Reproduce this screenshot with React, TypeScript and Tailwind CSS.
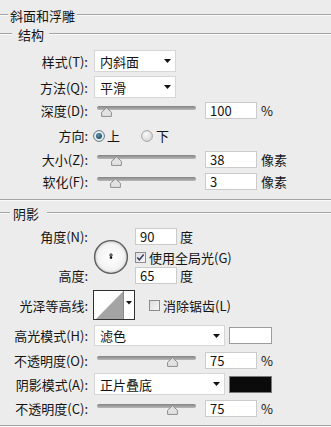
import React from 'react';

const Label: React.FC<{ children: React.ReactNode }> = ({ children }) => (
  <div className="w-[88px] shrink-0 text-right whitespace-nowrap">{children}</div>
);

const Line: React.FC<{ className?: string }> = ({ className = '' }) => (
  <div className={`h-0 border-t border-[#a4a4a4] border-b border-b-[#fafafa] ${className}`} />
);

const Header: React.FC<{ title: string; left: string; text: string }> = ({ title, left, text }) => (
  <div className="flex items-center h-[18px]">
    <Line className={`shrink-0 ${left}`} />
    <span className={text}>{title}</span>
    <Line className="flex-1" />
  </div>
);

const Arrow = () => (
  <svg width="7" height="4" viewBox="0 0 7 4">
    <path d="M0 0 H7 L3.5 4 Z" fill="#111" />
  </svg>
);

const Select: React.FC<{ value: string; width: string }> = ({ value, width }) => (
  <div
    className={`ml-[6px] h-full ${width} bg-white border border-[#d6d6d6] flex items-center justify-between pl-[5px] pr-[4px]`}
  >
    <span>{value}</span>
    <Arrow />
  </div>
);

const Input: React.FC<{ value: string; className?: string }> = ({ value, className = '' }) => (
  <div className={`h-full bg-white border border-[#cbcbcb] flex items-center pl-[4px] ${className}`}>
    {value}
  </div>
);

const Slider: React.FC<{ thumb: string }> = ({ thumb }) => (
  <div className="relative w-[99px] h-full ml-[9px] shrink-0">
    <div className="absolute left-0 right-0 top-[4px] h-[4px] rounded-full bg-gradient-to-b from-[#848484] to-[#b8b8b8]" />
    {/* thumb sits on top of the track */}
    <svg className={`absolute top-[5px] ${thumb}`} width="11" height="10" viewBox="0 0 11 10">
      <path d="M5.5 0.8 L10.4 5.2 V9.4 H0.6 V5.2 Z" fill="#e2e2e2" stroke="#8e8e8e" strokeWidth="1" />
    </svg>
  </div>
);

const SliderRow: React.FC<{ label: string; thumb: string; value: string; unit: string; mt: string }> = ({
  label,
  thumb,
  value,
  unit,
  mt,
}) => (
  <div className={`flex items-center h-[17px] ${mt}`}>
    <Label>{label}</Label>
    <Slider thumb={thumb} />
    <Input value={value} className="ml-[9px] w-[52px]" />
    <span className="ml-[4px]">{unit}</span>
  </div>
);

const Radio: React.FC<{ checked?: boolean }> = ({ checked }) => (
  <svg width="12" height="12" viewBox="0 0 12 12">
    <defs>
      <radialGradient id="rOff" cx="0.4" cy="0.35" r="0.7">
        <stop offset="0" stopColor="#fafafa" />
        <stop offset="1" stopColor="#d4d4d4" />
      </radialGradient>
      <radialGradient id="rOn" cx="0.4" cy="0.35" r="0.7">
        <stop offset="0" stopColor="#5a95b0" />
        <stop offset="1" stopColor="#1f4a5e" />
      </radialGradient>
    </defs>
    <circle cx="6" cy="6" r="5.4" fill={checked ? '#e9eef1' : 'url(#rOff)'} stroke={checked ? '#5f7480' : '#a6a6a6'} />
    {checked && <circle cx="6" cy="6" r="3" fill="url(#rOn)" />}
  </svg>
);

const Checkbox: React.FC<{ checked?: boolean }> = ({ checked }) => (
  <svg width="11" height="11" viewBox="0 0 11 11">
    <defs>
      <linearGradient id="cb" x1="0" y1="0" x2="1" y2="1">
        <stop offset="0" stopColor="#dcdcdc" />
        <stop offset="1" stopColor="#f8f8f8" />
      </linearGradient>
    </defs>
    <rect x="0.5" y="0.5" width="10" height="10" fill="url(#cb)" stroke="#8c8c8c" />
    {checked && <path d="M2.3 5.4 L4.4 7.8 L8.7 2.6" fill="none" stroke="#2f3f66" strokeWidth="1.5" />}
  </svg>
);

export default function App() {
  return (
    <div className="w-[331px] h-[427px] overflow-hidden bg-[#ececec] text-[13px] leading-none text-[#141414] font-['Noto_Sans_CJK_SC','Noto_Sans',sans-serif] flex flex-col">
      {/* 斜面和浮雕 */}
      <div className="mt-[6px]">
        <Header title="斜面和浮雕" left="w-[8px]" text="px-[2px]" />
      </div>
      <div className="mt-[1px]">
        <Header title="结构" left="w-[12px]" text="pl-[6px] pr-[5px]" />
      </div>

      <div className="flex items-center h-[22px] mt-[7px]">
        <Label>样式(T):</Label>
        <Select value="内斜面" width="w-[82px]" />
      </div>
      <div className="flex items-center h-[22px] mt-[4px]">
        <Label>方法(Q):</Label>
        <Select value="平滑" width="w-[82px]" />
      </div>

      <SliderRow label="深度(D):" thumb="left-[4px]" value="100" unit="%" mt="mt-[4px]" />

      <div className="flex items-center h-[17px] mt-[8px]">
        <Label>方向:</Label>
        <div className="ml-[5px] flex items-center">
          <Radio checked />
          <span className="ml-[2px]">上</span>
        </div>
        <div className="ml-[21px] flex items-center">
          <Radio />
          <span className="ml-[3px]">下</span>
        </div>
      </div>

      <SliderRow label="大小(Z):" thumb="left-[14px]" value="38" unit="像素" mt="mt-[7px]" />
      <SliderRow label="软化(F):" thumb="left-[13px]" value="3" unit="像素" mt="mt-[5px]" />

      <Line className="mt-[9px]" />

      {/* 阴影 */}
      <div className="mt-[3px]">
        <Header title="阴影" left="w-[10px]" text="pl-[3px] pr-[8px]" />
      </div>

      <div className="flex mt-[6px]">
        <div className="flex flex-col">
          <div className="h-[17px] flex items-center">
            <Label>角度(N):</Label>
          </div>
          <div className="h-[17px] flex items-center mt-[22px]">
            <Label>高度:</Label>
          </div>
        </div>
        <div className="ml-[5px] pt-[11px] w-[36px] shrink-0">
          <svg width="36" height="36" viewBox="0 0 36 36">
            <defs>
              <radialGradient id="dial" cx="0.5" cy="0.5" r="0.5">
                <stop offset="0" stopColor="#ffffff" />
                <stop offset="0.8" stopColor="#f3f3f3" />
                <stop offset="1" stopColor="#cfcfcf" />
              </radialGradient>
            </defs>
            <circle cx="18" cy="18" r="16.4" fill="url(#dial)" stroke="#5e5e5e" strokeWidth="1.4" />
            <path d="M16 16 H20 M18 14 V18" stroke="#222" strokeWidth="0.9" />
            <circle cx="18" cy="18.6" r="1.3" fill="#111" />
          </svg>
        </div>
        <div className="ml-[6px] flex flex-col">
          <div className="h-[17px] flex items-center">
            <Input value="90" className="w-[42px]" />
            <span className="ml-[3px]">度</span>
          </div>
          <div className="h-[13px] mt-[6px] flex items-center">
            <Checkbox checked />
            <span className="ml-[3px]">使用全局光(G)</span>
          </div>
          <div className="h-[17px] mt-[3px] flex items-center">
            <Input value="65" className="w-[42px]" />
            <span className="ml-[3px]">度</span>
          </div>
        </div>
      </div>

      <div className="flex items-center h-[30px] mt-[6px]">
        <Label>光泽等高线:</Label>
        <svg className="ml-[5px] shrink-0" width="42" height="30" viewBox="0 0 42 30">
          <rect x="0.5" y="0.5" width="41" height="29" fill="#ffffff" stroke="#303030" />
          <path d="M3 29 L30 1.5 V29 Z" fill="#a4a4a4" />
          <path d="M30.5 1 V29" stroke="#8a8a8a" />
          <path d="M33 11 H39 L36 14.5 Z" fill="#111" />
        </svg>
        <div className="ml-[14px] flex items-center">
          <Checkbox />
          <span className="ml-[3px]">消除锯齿(L)</span>
        </div>
      </div>

      <div className="flex items-center h-[21px] mt-[5px]">
        <Label>高光模式(H):</Label>
        <Select value="滤色" width="w-[131px]" />
        <div className="ml-[4px] w-[43px] h-[17px] bg-white border border-[#9c9c9c]" />
      </div>

      <SliderRow label="不透明度(O):" thumb="left-[70px]" value="75" unit="%" mt="mt-[6px]" />

      <div className="flex items-center h-[22px] mt-[4px]">
        <Label>阴影模式(A):</Label>
        <Select value="正片叠底" width="w-[131px]" />
        <div className="ml-[4px] w-[43px] h-[17px] bg-[#0b0b0b] border border-[#7a7a7a]" />
      </div>

      <SliderRow label="不透明度(C):" thumb="left-[70px]" value="75" unit="%" mt="mt-[5px]" />

      <Line className="mt-[8px]" />
    </div>
  );
}
